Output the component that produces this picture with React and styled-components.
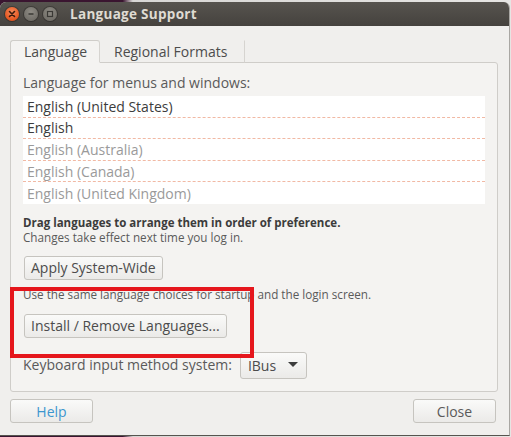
import React from "react";
import styled, { createGlobalStyle } from "styled-components";

const GlobalStyle = createGlobalStyle`
  html, body {
    margin: 0;
    padding: 0;
    width: 511px;
    height: 437px;
    overflow: hidden;
    background: #e4e3e1;
    font-family: "Open Sans", "Liberation Sans", sans-serif;
  }
`;

const languages = [
  { name: "English (United States)", active: true },
  { name: "English", active: true },
  { name: "English (Australia)", active: false },
  { name: "English (Canada)", active: false },
  { name: "English (United Kingdom)", active: false },
];

export default function App() {
  return (
    <>
      <GlobalStyle />
      <Desktop>
        <Window>
          <TitleBar>
            <WinControls>
              <WinButton $kind="close">
                <svg width="8" height="8" viewBox="0 0 8 8">
                  <path d="M1.5 1.5 L6.5 6.5 M6.5 1.5 L1.5 6.5" stroke="#3a1a0c" strokeWidth="1.6" strokeLinecap="round" />
                </svg>
              </WinButton>
              <WinButton>
                <svg width="8" height="8" viewBox="0 0 8 8">
                  <path d="M1.5 4 L6.5 4" stroke="#3a3935" strokeWidth="1.4" />
                </svg>
              </WinButton>
              <WinButton>
                <svg width="8" height="8" viewBox="0 0 8 8">
                  <rect x="1.5" y="1.5" width="5" height="5" fill="none" stroke="#3a3935" strokeWidth="1.2" />
                </svg>
              </WinButton>
            </WinControls>
            <Title>Language Support</Title>
          </TitleBar>

          <Body>
            <Tabs>
              <Tab $active>Language</Tab>
              <Tab>Regional Formats</Tab>
            </Tabs>
            <Panel>
              <Label>Language for menus and windows:</Label>
              <LangList>
                {languages.map((l, i) => (
                  <LangRow key={l.name} $active={l.active} $last={i === languages.length - 1}>
                    {l.name}
                  </LangRow>
                ))}
              </LangList>
              <Hint $bold $top={12}>Drag languages to arrange them in order of preference.</Hint>
              <Hint>Changes take effect next time you log in.</Hint>
              <Button $top={12}>Apply System-Wide</Button>
              <Hint $top={7}>Use the same language choices for startup and the login screen.</Hint>
              <Button $top={13}>Install / Remove Languages...</Button>
              <InputRow>
                <Label>Keyboard input method system:</Label>
                <Combo>
                  IBus
                  <svg width="10" height="6" viewBox="0 0 10 6">
                    <path d="M0 0 L10 0 L5 5 Z" fill="#3c3c3c" />
                  </svg>
                </Combo>
              </InputRow>
            </Panel>
            <Footer>
              <DialogButton $primary>Help</DialogButton>
              <DialogButton>Close</DialogButton>
            </Footer>
          </Body>
          <Highlight />
        </Window>
      </Desktop>
    </>
  );
}

const Desktop = styled.div`
  width: 511px;
  height: 437px;
  background: linear-gradient(90deg, #3a1530 0%, #3a1530 24%, #d8d7d5 26%, #e6e5e3 100%);
  padding-top: 2px;
  box-sizing: border-box;
`;

const Window = styled.div`
  position: relative;
  width: 510px;
  height: 434px;
  display: flex;
  flex-direction: column;
  background: #f0efed;
  border-right: 1px solid #a9a7a3;
  border-bottom: 1px solid #56544f;
  border-radius: 6px 6px 0 0;
  overflow: hidden;
  box-sizing: border-box;
`;

const TitleBar = styled.div`
  height: 24px;
  flex-shrink: 0;
  display: flex;
  align-items: center;
  padding-left: 5px;
  background: linear-gradient(180deg, #57544f 0%, #45423e 100%);
`;

const WinControls = styled.div`
  display: flex;
  gap: 5px;
  align-items: center;
`;

const WinButton = styled.div`
  width: 14px;
  height: 14px;
  border-radius: 50%;
  display: flex;
  align-items: center;
  justify-content: center;
  background: ${(p) =>
    p.$kind === "close"
      ? "radial-gradient(circle at 50% 35%, #f58a5c 0%, #e5561f 70%, #c9431a 100%)"
      : "radial-gradient(circle at 50% 35%, #8e8b84 0%, #6f6c66 80%)"};
  box-shadow: 0 0 0 1px rgba(0, 0, 0, 0.25);
`;

const Title = styled.div`
  margin-left: 13px;
  color: #dfdbd2;
  font-weight: 700;
  font-size: 13.5px;
  letter-spacing: 0.3px;
`;

const Body = styled.div`
  flex: 1;
  display: flex;
  flex-direction: column;
  padding: 14px 11px 0 10px;
`;

const Tabs = styled.div`
  display: flex;
  height: 23px;
  margin-bottom: -1px;
  position: relative;
  z-index: 1;
`;

const Tab = styled.div`
  display: flex;
  align-items: center;
  padding: 0 0 0 13px;
  width: ${(p) => (p.$active ? "90px" : "145px")};
  box-sizing: border-box;
  font-size: 14px;
  color: #4c4c4c;
  background: ${(p) => (p.$active ? "#f4f3f1" : "transparent")};
  border: 1px solid ${(p) => (p.$active ? "#cfcdc9" : "transparent")};
  border-bottom: ${(p) => (p.$active ? "1px solid #f4f3f1" : "1px solid #cfcdc9")};
  border-right: 1px solid #d6d4d0;
  border-radius: ${(p) => (p.$active ? "3px 3px 0 0" : "0")};
`;

const Panel = styled.div`
  width: 488px;
  height: 330px;
  box-sizing: border-box;
  display: flex;
  flex-direction: column;
  align-items: flex-start;
  padding: 12px 14px 0 12px;
  background: #f4f3f1;
  border: 1px solid #cfcdc9;
  border-radius: 0 3px 3px 3px;
`;

const Label = styled.div`
  font-size: 14px;
  line-height: 16px;
  color: #5a5a5a;
`;

const LangList = styled.div`
  margin-top: 5px;
  width: 462px;
  background: #ffffff;
  display: flex;
  flex-direction: column;
`;

const LangRow = styled.div`
  height: 21.6px;
  display: flex;
  align-items: center;
  padding-left: 4px;
  box-sizing: border-box;
  font-size: 14px;
  color: ${(p) => (p.$active ? "#3c3c3c" : "#9a9a9a")};
  border-bottom: ${(p) => (p.$last ? "none" : "1px dashed #f1b9a4")};
`;

const Hint = styled.div`
  font-size: ${(p) => (p.$bold ? "11.5px" : "11.7px")};
  line-height: 14px;
  color: ${(p) => (p.$bold ? "#3c3c3c" : "#5a5a5a")};
  font-weight: ${(p) => (p.$bold ? 700 : 400)};
  margin-top: ${(p) => p.$top || 0}px;
`;

const Button = styled.div`
  height: 24px;
  box-sizing: border-box;
  display: flex;
  align-items: center;
  padding: 0 6px;
  margin-left: 1px;
  margin-top: ${(p) => p.$top || 0}px;
  font-size: 14px;
  color: #4c4c4c;
  background: linear-gradient(180deg, #fafaf9 0%, #ebeae8 100%);
  border: 1px solid #c6c4bf;
  border-radius: 3px;
`;

const InputRow = styled.div`
  margin-top: 14px;
  display: flex;
  align-items: center;
  gap: 8px;
`;

const Combo = styled(Button)`
  height: 27px;
  gap: 12px;
  padding: 0 8px 0 7px;
  margin-left: 0;
`;

const Footer = styled.div`
  display: flex;
  justify-content: space-between;
  margin-top: 7px;
  padding-right: 2px;
`;

const DialogButton = styled(Button)`
  width: 83px;
  justify-content: center;
  margin-left: 0;
  color: ${(p) => (p.$primary ? "#3d96cf" : "#5a5a5a")};
`;

const Highlight = styled.div`
  position: absolute;
  left: 10px;
  top: 285px;
  width: 244px;
  height: 71px;
  box-sizing: border-box;
  border: 4px solid #e5161c;
  pointer-events: none;
`;
